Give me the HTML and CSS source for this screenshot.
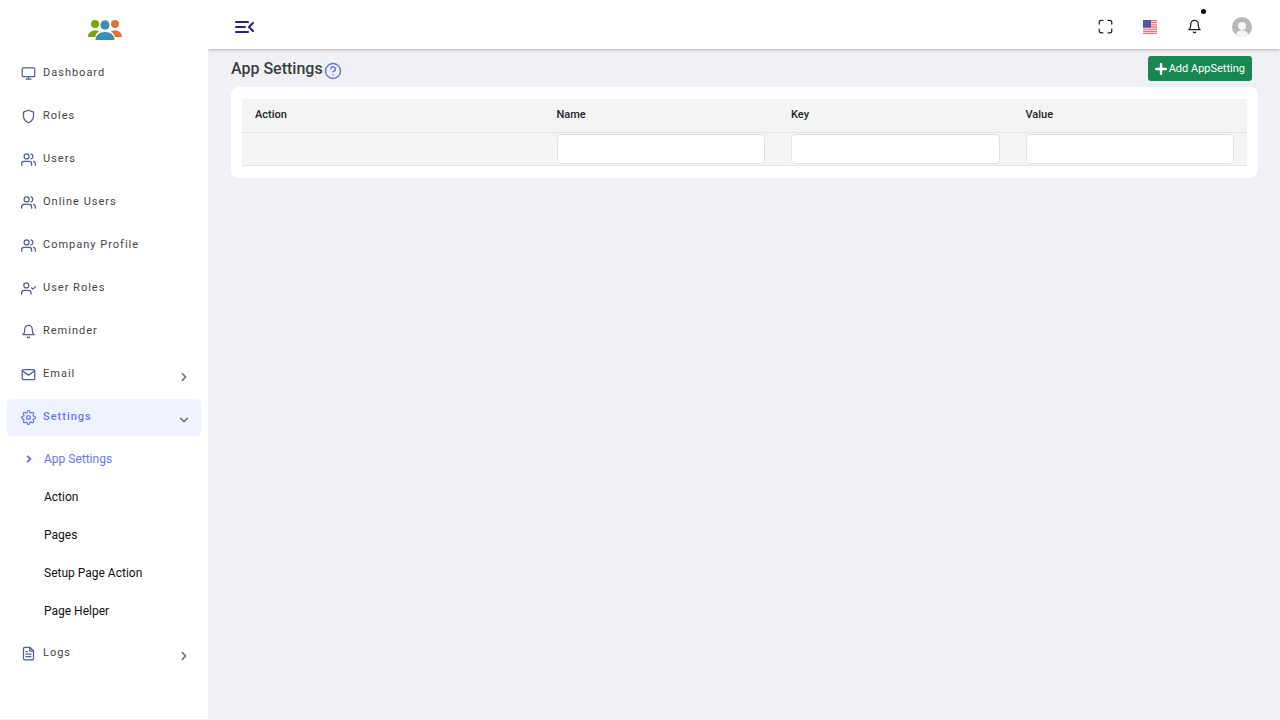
FILE: index.html
```
<!DOCTYPE html>
<html lang="en">
<head>
	<meta charset="utf-8">
	<meta name="viewport" content="width=device-width, initial-scale=1">
	<title>App Settings</title>
	<link rel="stylesheet" href="styles.css">
</head>
<body>
	<svg class="sprite">
		<symbol id="users" viewBox="0 0 24 24"><path d="M17 21v-2a4 4 0 0 0-4-4H5a4 4 0 0 0-4 4v2"/><circle cx="9" cy="7" r="4"/><path d="M23 21v-2a4 4 0 0 0-3-3.87M16 3.13a4 4 0 0 1 0 7.75"/></symbol>
		<symbol id="bell" viewBox="0 0 24 24"><path d="M18 8A6 6 0 0 0 6 8c0 7-3 9-3 9h18s-3-2-3-9M13.73 21a2 2 0 0 1-3.46 0"/></symbol>
		<symbol id="chevron" viewBox="0 0 24 24"><path d="M8 4l8 8-8 8"/></symbol>
	</svg>
	<aside class="sidebar">
		<a class="logo" href="#" aria-label="Home">
			<svg viewBox="0 0 34 22">
				<g fill="#7aa30c"><circle cx="7" cy="5" r="4"/><path d="M0 18c0-4 3-6.500 7-6.500 1.500 0 3 .3 4 1C8.500 14 7.500 16 7.300 18z"/></g>
				<g fill="#e2732f"><circle cx="27" cy="5" r="4"/><path d="M34 18c0-4-3-6.500-7-6.500-1.500 0-3 .3-4 1 2.500 1.500 3.500 3.500 3.700 5.500z"/></g>
				<g fill="#3a8fb3"><circle cx="17" cy="6" r="4.700"/><path d="M7.500 21c0-4.500 4-8 9.500-8s9.500 3.500 9.500 8z"/></g>
			</svg>
		</a>
		<nav class="menu">
			<a class="item" href="#"><svg class="icon" viewBox="0 0 24 24"><rect x="2" y="3" width="20" height="14" rx="2"/><path d="M8 21h8M12 17v4"/></svg><span>Dashboard</span></a>
			<a class="item" href="#"><svg class="icon" viewBox="0 0 24 24"><path d="M12 22s8-4 8-10V5l-8-3-8 3v7c0 6 8 10 8 10z"/></svg><span>Roles</span></a>
			<a class="item" href="#"><svg class="icon"><use href="#users"/></svg><span>Users</span></a>
			<a class="item" href="#"><svg class="icon"><use href="#users"/></svg><span>Online Users</span></a>
			<a class="item" href="#"><svg class="icon"><use href="#users"/></svg><span>Company Profile</span></a>
			<a class="item" href="#"><svg class="icon" viewBox="0 0 24 24"><path d="M16 21v-2a4 4 0 0 0-4-4H5a4 4 0 0 0-4 4v2"/><circle cx="8.500" cy="7" r="4"/><path d="M17 11l2 2 4-4"/></svg><span>User Roles</span></a>
			<a class="item" href="#"><svg class="icon"><use href="#bell"/></svg><span>Reminder</span></a>
			<a class="item" href="#"><svg class="icon" viewBox="0 0 24 24"><rect x="2" y="4" width="20" height="16" rx="2"/><path d="M22 6l-10 7L2 6"/></svg><span>Email</span><svg class="arrow"><use href="#chevron"/></svg></a>
			<a class="item active" href="#"><svg class="icon" viewBox="0 0 24 24"><circle cx="12" cy="12" r="3"/><path d="M19.4 15a1.65 1.65 0 0 0 .33 1.82l.06.06a2 2 0 0 1 0 2.83 2 2 0 0 1-2.83 0l-.06-.06a1.65 1.65 0 0 0-1.82-.33 1.65 1.65 0 0 0-1 1.51V21a2 2 0 0 1-2 2 2 2 0 0 1-2-2v-.09A1.65 1.65 0 0 0 9 19.4a1.65 1.65 0 0 0-1.82.33l-.06.06a2 2 0 0 1-2.83 0 2 2 0 0 1 0-2.83l.06-.06a1.65 1.65 0 0 0 .33-1.82 1.65 1.65 0 0 0-1.51-1H3a2 2 0 0 1-2-2 2 2 0 0 1 2-2h.09A1.65 1.65 0 0 0 4.6 9a1.65 1.65 0 0 0-.33-1.82l-.06-.06a2 2 0 0 1 0-2.83 2 2 0 0 1 2.83 0l.06.06a1.65 1.65 0 0 0 1.82.33H9a1.65 1.65 0 0 0 1-1.51V3a2 2 0 0 1 2-2 2 2 0 0 1 2 2v.09a1.65 1.65 0 0 0 1 1.51 1.65 1.65 0 0 0 1.82-.33l.06-.06a2 2 0 0 1 2.83 0 2 2 0 0 1 0 2.83l-.06.06a1.65 1.65 0 0 0-.33 1.82V9a1.65 1.65 0 0 0 1.51 1H21a2 2 0 0 1 2 2 2 2 0 0 1-2 2h-.09a1.65 1.65 0 0 0-1.51 1z"/></svg><span>Settings</span><svg class="arrow down"><use href="#chevron"/></svg></a>
			<div class="submenu">
				<a class="current" href="#"><svg class="marker"><use href="#chevron"/></svg>App Settings</a>
				<a href="#">Action</a>
				<a href="#">Pages</a>
				<a href="#">Setup Page Action</a>
				<a href="#">Page Helper</a>
			</div>
			<a class="item" href="#"><svg class="icon" viewBox="0 0 24 24"><path d="M14 2H6a2 2 0 0 0-2 2v16a2 2 0 0 0 2 2h12a2 2 0 0 0 2-2V8zM14 2v6h6M16 13H8M16 17H8M10 9H8"/></svg><span>Logs</span><svg class="arrow"><use href="#chevron"/></svg></a>
		</nav>
	</aside>
	<div class="page">
		<header class="topbar">
			<button class="toggle" type="button" aria-label="Toggle menu"><svg viewBox="0 0 20 14"><path d="M1 2h12M1 7h9M1 12h12M18 3l-4 4 4 4"/></svg></button>
			<div class="tools">
				<button type="button" aria-label="Full screen"><svg class="tool" viewBox="0 0 24 24"><path d="M8 2H5a3 3 0 0 0-3 3v3M22 8V5a3 3 0 0 0-3-3h-3M16 22h3a3 3 0 0 0 3-3v-3M2 16v3a3 3 0 0 0 3 3h3"/></svg></button>
				<button type="button" aria-label="Language"><svg class="flag" viewBox="0 0 14 14"><path fill="#fff" d="M0 0h14v14H0z"/><path stroke="#ff6b78" stroke-width="1.300" d="M0 .6h14M0 2.700h14M0 4.800h14M0 7h14M0 9.200h14M0 11.300h14M0 13.400h14"/><path fill="#4852a0" d="M0 0h8v7.500H0z"/><path stroke="#7d85c0" stroke-width=".5" stroke-dasharray=".7 .9" d="M.7 1.500h7M.7 3.500h7M.7 5.500h7"/></svg></button>
				<button class="alerts" type="button" aria-label="Notifications"><svg class="tool"><use href="#bell"/></svg><i class="dot"></i></button>
				<button type="button" aria-label="Account"><svg class="avatar" viewBox="0 0 20 20"><circle cx="10" cy="10" r="10" fill="#b8b8b8"/><circle cx="10" cy="9" r="4" fill="#f6f6f6"/><path d="M4 18c0-3 2.500-4.500 6-4.500s6 1.500 6 4.500c-3.500 2.600-8.500 2.600-12 0z" fill="#f6f6f6"/></svg></button>
			</div>
		</header>
		<main class="content">
			<div class="heading">
				<h1>App Settings</h1>
				<a class="help" href="#" aria-label="Help"><svg viewBox="0 0 24 24"><circle cx="12" cy="12" r="10"/><path d="M9 9a3 3 0 0 1 6 1c0 2-3 3-3 3M12 17h.01"/></svg></a>
				<button class="add" type="button"><svg viewBox="0 0 10 10"><path d="M5 1v8M1 5h8"/></svg>Add AppSetting</button>
			</div>
			<section class="card">
				<table>
					<thead>
						<tr><th class="action">Action</th><th id="name">Name</th><th id="key">Key</th><th id="value">Value</th></tr>
						<tr>
							<td></td>
							<td><input type="text" aria-labelledby="name"></td>
							<td><input type="text" aria-labelledby="key"></td>
							<td><input type="text" aria-labelledby="value"></td>
						</tr>
					</thead>
				</table>
			</section>
		</main>
	</div>
</body>
</html>
```
FILE: styles.css
```
*{
	box-sizing: border-box;
}
body{
	margin: 0;
	display: flex;
	min-height: 100vh;
	background: #f0f1f7;
	color: #212529;
	font-family: Roboto, sans-serif;
	font-size: 11px;
}
svg{
	display: block;
	fill: none;
	stroke-linecap: round;
	stroke-linejoin: round;
	flex-shrink: 0;
}
a{
	color: inherit;
	text-decoration: none;
}
button{
	border: 0;
	padding: 0;
	background: none;
	color: inherit;
	font: inherit;
	cursor: pointer;
}
.sprite{
	display: none;
}
.sidebar{
	position: relative;
	z-index: 1;
	width: 208px;
	flex-shrink: 0;
	background: #fff;
	border-bottom: 1px solid #eee;
}
.logo{
	display: flex;
	justify-content: center;
	height: 55px;
	padding-top: 19px;
	padding-left: 1px;
}
.logo svg{
	width: 34px;
	height: 22px;
}
.menu{
	display: flex;
	flex-direction: column;
	gap: 6px;
	padding: 0 7px;
}
.item{
	display: flex;
	align-items: center;
	height: 37px;
	padding: 0 12px 0 14px;
	border-radius: 5px;
	color: #444;
	letter-spacing: 1px;
}
.item span{
	flex: 1;
	margin-left: 7px;
	padding-bottom: 2px;
}
.icon{
	width: 15px;
	height: 15px;
	stroke: #515e97;
	stroke-width: 2;
	overflow: visible;
}
.arrow{
	width: 10px;
	height: 10px;
	margin-top: 4px;
	stroke: #777;
	stroke-width: 4;
}
.down{
	transform: rotate(90deg);
}
.active{
	background: #f0f3fd;
	color: #6777ef;
	font-weight: 500;
}
.active .icon{
	stroke: #6777ef;
}
.submenu{
	margin: -2px 0 -1px;
	font-size: 12px;
}
.submenu a{
	display: flex;
	align-items: center;
	height: 38px;
	padding-left: 37px;
	color: #111;
}
.submenu .current{
	padding-left: 18px;
	color: #6777ef;
}
.marker{
	width: 8px;
	height: 8px;
	margin-right: 11px;
	stroke: #6777ef;
	stroke-width: 6;
}
.page{
	flex: 1;
	min-width: 0;
}
.topbar{
	display: flex;
	align-items: center;
	justify-content: space-between;
	height: 49px;
	padding: 4px 28px 0 27px;
	background: #fff;
	box-shadow: 0 1px 3px rgba(0,0,0,.25);
}
.toggle svg{
	width: 20px;
	height: 14px;
	stroke: #2b2170;
	stroke-width: 2;
}
.tools{
	display: flex;
	align-items: center;
	gap: 30px;
}
.tool{
	width: 15px;
	height: 15px;
	stroke: #222;
	stroke-width: 2;
}
.flag{
	width: 14px;
	height: 14px;
	stroke-linecap: butt;
}
.alerts{
	position: relative;
}
.dot{
	position: absolute;
	top: -10px;
	right: -4px;
	width: 5px;
	height: 5px;
	border-radius: 50%;
	background: #000;
}
.avatar{
	width: 20px;
	height: 20px;
}
.content{
	padding: 7px 22px 22px 23px;
}
.heading{
	display: flex;
	align-items: center;
	height: 25px;
	margin-bottom: 6px;
}
h1{
	margin: 0;
	color: #3c3c3c;
	font-size: 16px;
	font-weight: 500;
}
.help svg{
	width: 18px;
	height: 18px;
	margin: 4px 0 0 1px;
	stroke: #6777ef;
	stroke-width: 2;
}
.add{
	display: flex;
	align-items: center;
	gap: 2px;
	height: 25px;
	margin-left: auto;
	margin-right: 6px;
	padding: 0 7px;
	border-radius: 3px;
	background: #198754;
	color: #fff;
}
.add svg{
	width: 12px;
	height: 12px;
	stroke: #fff;
	stroke-width: 2;
}
.card{
	padding: 12px 11px;
	border-radius: 8px;
	background: #fff;
}
table{
	width: 100%;
	table-layout: fixed;
	border-collapse: collapse;
	background: #f4f4f4;
}
th, td{
	padding: 0 13px;
	border-bottom: 1px solid #e4e4e4;
	text-align: left;
}
th{
	height: 33px;
	padding-bottom: 2px;
	font-weight: 500;
}
td{
	height: 33px;
}
.action{
	width: 30%;
}
input{
	display: block;
	width: 100%;
	height: 30px;
	padding: 0 8px;
	border: 1px solid #e0e3e6;
	border-radius: 4px;
	background: #fff;
	font: inherit;
}
```
